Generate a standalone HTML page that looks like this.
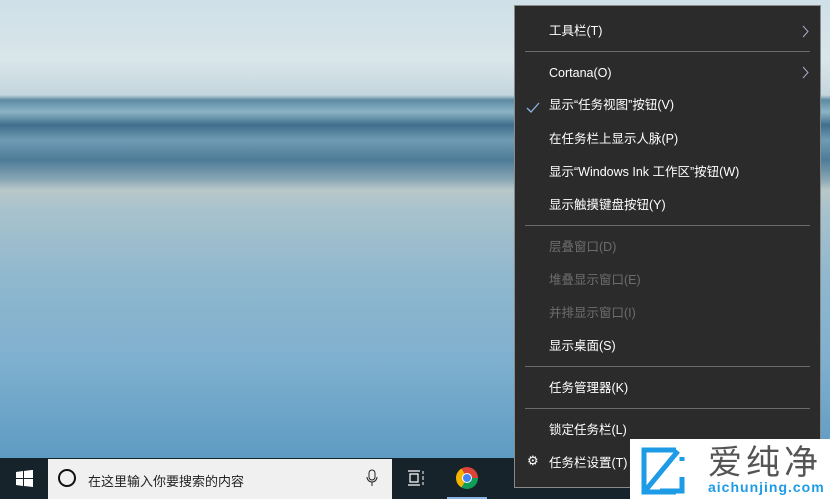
<html><head><style>
body{margin:0;width:830px;height:499px;overflow:hidden;position:relative;font-family:"Liberation Sans","Noto Sans CJK SC",sans-serif}
.bg{position:absolute;inset:0;background:linear-gradient(180deg,#cfe0e8 0,#d9e6ea 60px,#c4d6dd 95px,#5d8aa3 100px,#8cb4c6 112px,#3f6f8c 125px,#6f9bb3 140px,#4d7c98 160px,#8aa7b5 180px,#b8c8c9 190px,#a8c2cc 210px,#8fb7ce 280px,#7fb0cf 360px,#5e9bc3 458px)}
.menu{position:absolute;z-index:5;left:514px;top:5px;width:305px;height:481px;background:#2b2b2b;border:1px solid #8a8a8a;color:#fff;font-size:12.5px}
.it{position:absolute;left:34px;line-height:16px}
.d{color:#6d6d6d}
.sep{position:absolute;left:10px;right:10px;height:1px;background:#6a6a6a}
.arr{position:absolute;right:10px;color:#ccc;font-size:14px}
.tb{position:absolute;z-index:2;left:0;top:458px;width:830px;height:41px;background:#16232b}
</style></head><body>
<div class="bg"></div>
<div class="menu">
<div class="it" style="top:17px">工具栏(T)</div><svg class="arr" style="top:19px" width="8" height="13"><path d="M1 1l5 5.5L1 12" stroke="#aac" fill="none"/></svg>
<div class="sep" style="top:45px"></div>
<div class="it" style="top:59px">Cortana(O)</div><svg class="arr" style="top:60px" width="8" height="13"><path d="M1 1l5 5.5L1 12" stroke="#aac" fill="none"/></svg>
<svg style="position:absolute;left:11px;top:96px" width="14" height="12"><path d="M1 6l4 4 8-9" stroke="#8ab4e6" fill="none" stroke-width="1.3"/></svg>
<div class="it" style="top:91px">显示“任务视图”按钮(V)</div>
<div class="it" style="top:125px">在任务栏上显示人脉(P)</div>
<div class="it" style="top:158px">显示“Windows Ink 工作区”按钮(W)</div>
<div class="it" style="top:191px">显示触摸键盘按钮(Y)</div>
<div class="sep" style="top:219px"></div>
<div class="it d" style="top:233px">层叠窗口(D)</div>
<div class="it d" style="top:266px">堆叠显示窗口(E)</div>
<div class="it d" style="top:299px">并排显示窗口(I)</div>
<div class="it" style="top:332px">显示桌面(S)</div>
<div class="sep" style="top:360px"></div>
<div class="it" style="top:374px">任务管理器(K)</div>
<div class="sep" style="top:402px"></div>
<div class="it" style="top:416px">锁定任务栏(L)</div>
<div style="position:absolute;left:12px;top:447px;font-size:13px">⚙</div>
<div class="it" style="top:449px">任务栏设置(T)</div>
</div>
<div class="tb">
<svg style="position:absolute;left:16px;top:12px" width="17" height="17"><path d="M0 2l7-1v7H0zM8 1l9-1.2V8H8zM0 9h7v7l-7-1zM8 9h9v8l-9-1z" fill="#fff"/></svg>
<div style="position:absolute;left:48px;top:1px;width:344px;height:40px;background:#f0f0f0"></div>
<div style="position:absolute;left:58px;top:11px;width:14px;height:14px;border:2.5px solid #111;border-radius:50%"></div>
<div style="position:absolute;left:88px;top:13px;font-size:13px;color:#222">在这里输入你要搜索的内容</div>
<svg style="position:absolute;left:366px;top:11px" width="12" height="18"><rect x="3" y="1" width="6" height="10" rx="3" fill="none" stroke="#222"/><path d="M1 8a5 5 0 0 0 10 0M6 13v4" stroke="#222" fill="none"/></svg>
<svg style="position:absolute;left:407px;top:12px" width="18" height="16"><path d="M1 1h12M1 15h12M3 4v8h8V4z" stroke="#fff" fill="none" stroke-width="1.2"/><path d="M16 1v3M16 6v4M16 12v3" stroke="#fff"/></svg>
<div style="position:absolute;left:456px;top:9px;width:22px;height:22px;border-radius:50%;background:conic-gradient(from -30deg,#db4437 0 120deg,#0f9d58 120deg 240deg,#f4b400 240deg 360deg)"></div>
<div style="position:absolute;left:462px;top:15px;width:8px;height:8px;border-radius:50%;background:#4285f4;border:1.5px solid #fff"></div>
<div style="position:absolute;left:447px;top:39px;width:40px;height:2px;background:#8ab4e6"></div>
</div>
<div style="position:absolute;z-index:9;left:630px;top:439px;width:200px;height:60px;background:#fff">
<svg style="position:absolute;left:10px;top:8px" width="52" height="48"><path d="M36 3H4v42h32M42 10v4M42 30v14H20M5 44L38 4" stroke="#1e9be6" stroke-width="5" fill="none"/></svg>
<div style="position:absolute;left:78px;top:2px;font-size:34px;color:#555;letter-spacing:4px;line-height:38px;font-family:'Noto Sans CJK SC',sans-serif">爱纯净</div>
<div style="position:absolute;left:78px;top:40px;font-size:14px;font-weight:bold;color:#1e9be6;letter-spacing:1px">aichunjing.com</div>
</div>
</body></html>
